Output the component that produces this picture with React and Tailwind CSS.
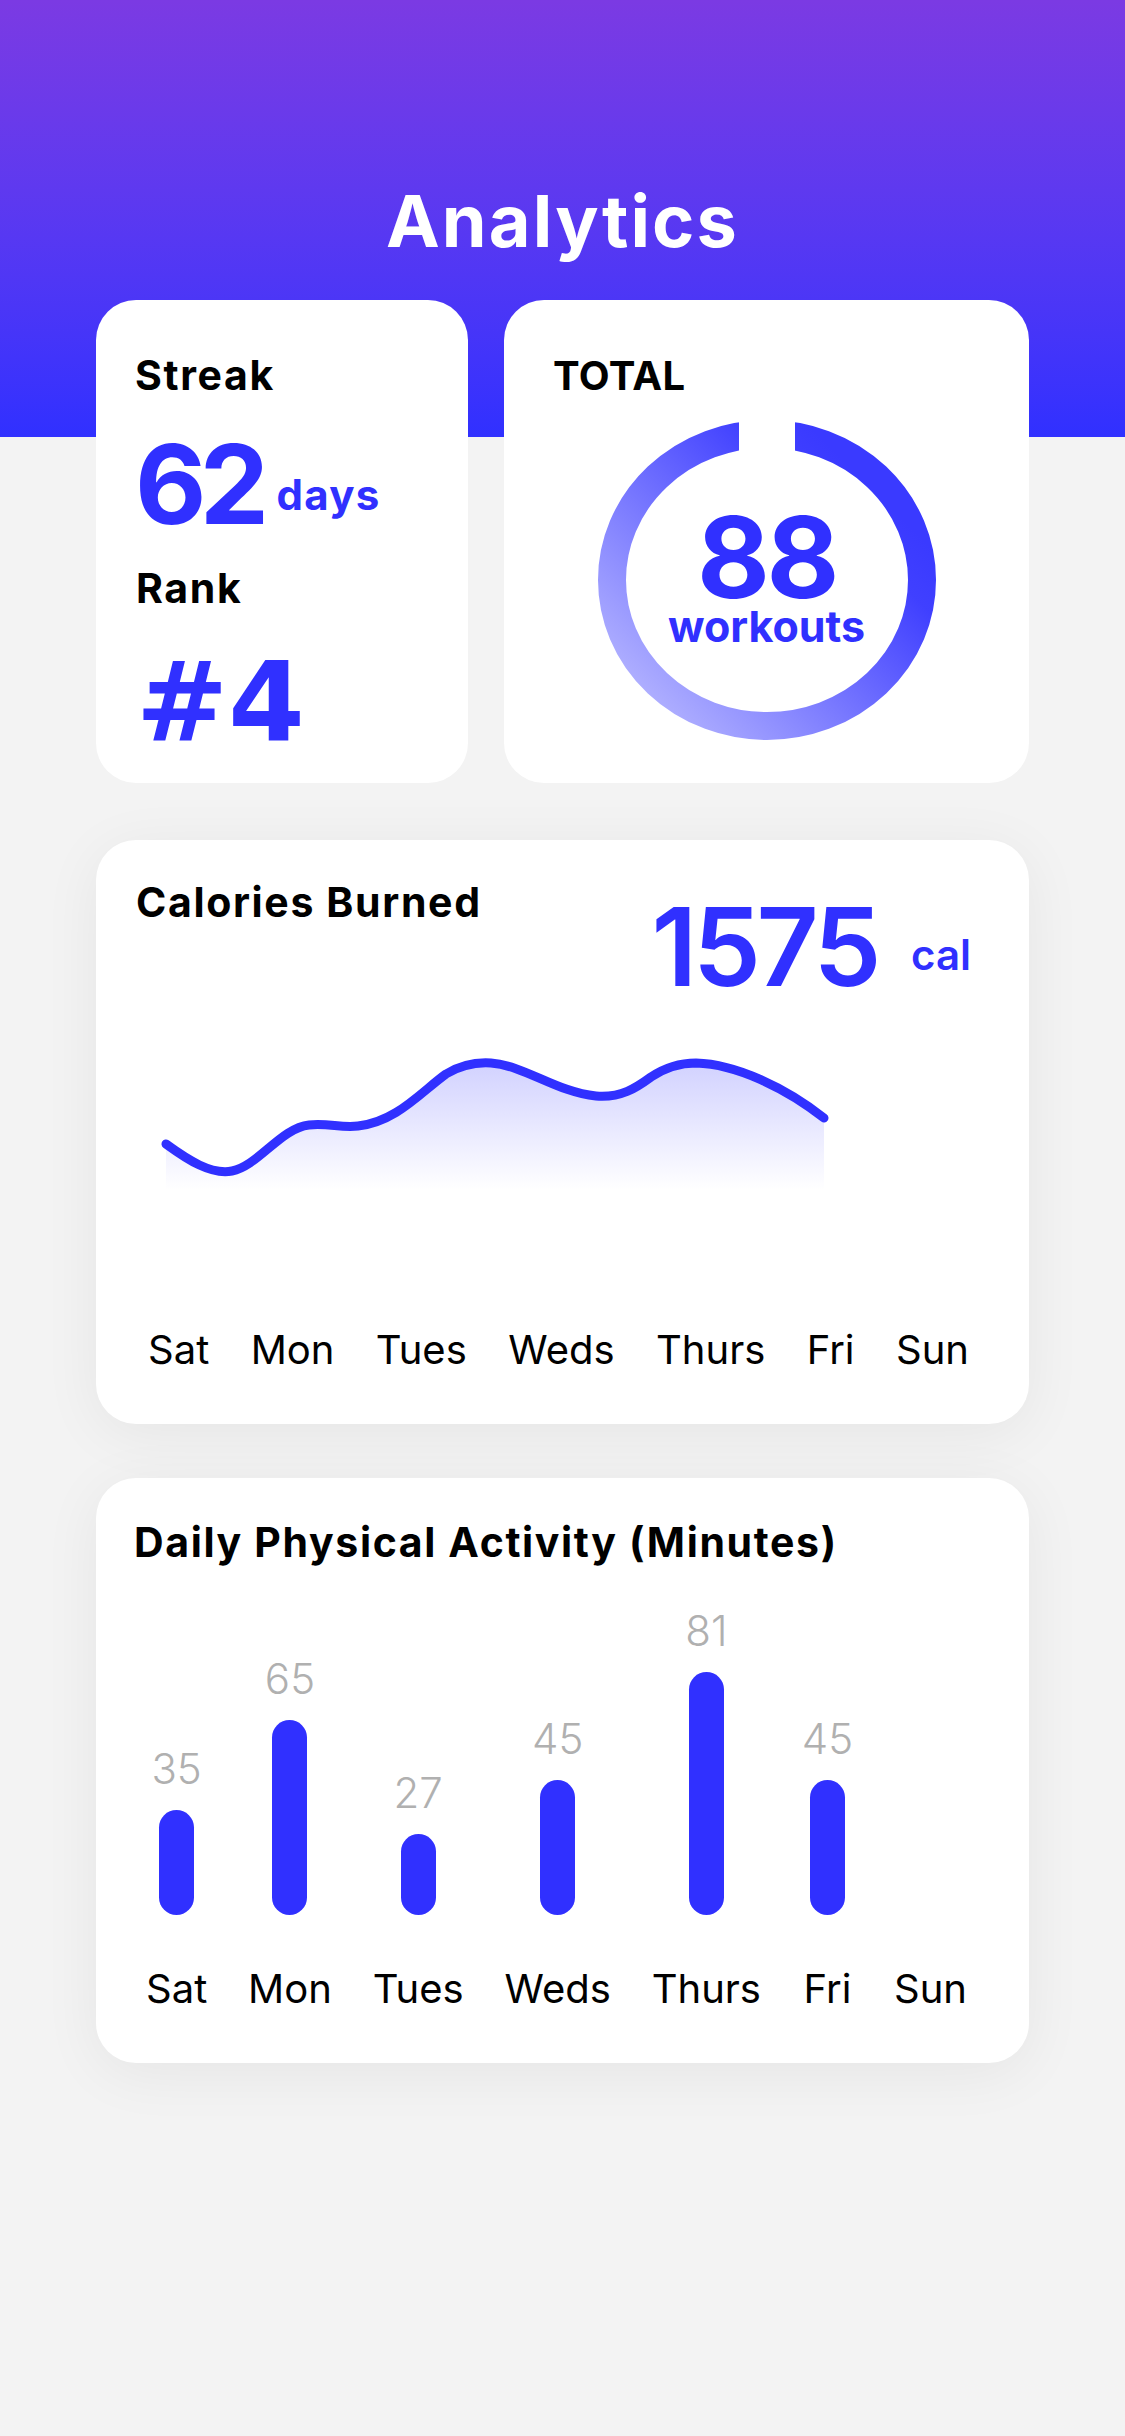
export default function App() {
  const days = ['Sat', 'Mon', 'Tues', 'Weds', 'Thurs', 'Fri', 'Sun'];
  const activity = [35, 65, 27, 45, 81, 45, null];
  const line =
    'M70,114 C92,130 115,145 136,141 C162,136 185,98 213,95 C232,93 245,98 262,96 C300,92 325,62 350,44 C365,35 380,32 395,33 C430,36 460,62 500,66 C525,68 540,58 555,47 C570,37 585,33 600,33 C640,34 690,58 728,88';
  return (
    <div className="w-[1125px] min-h-[2436px] bg-[#f3f3f3] font-['Inter',sans-serif] text-black">
      <div className="h-[437px] bg-linear-to-b from-[#7b3ae3] to-[#3030ff] pt-[185px] text-center">
        <h1 className="text-[72px] leading-none font-bold text-white tracking-[0.03em]">Analytics</h1>
      </div>
      <div className="-mt-[137px] px-[96px] flex flex-col">
        <div className="flex gap-[36px]">
          <div className="w-[372px] h-[483px] shrink-0 rounded-[40px] bg-white pt-[55px] pl-[39px]">
            <div className="text-[41px] leading-none font-bold tracking-[0.04em]">Streak</div>
            <div className="mt-[33px] flex items-end">
              <span className="text-[110px] leading-none font-bold text-[#3030ff] tracking-[-0.06em]">62</span>
              <span className="ml-[14px] mb-[23px] text-[42px] leading-none font-bold text-[#3030ff] tracking-[0.03em]">days</span>
            </div>
            <div className="mt-[29px] ml-[1px] text-[41px] leading-none font-bold tracking-[0.04em]">Rank</div>
            <div className="mt-[39px] ml-[1px] text-[110px] leading-none font-bold font-['DejaVu_Sans',sans-serif] text-[#3030ff]">#4</div>
          </div>
          <div className="flex-1 h-[483px] rounded-[40px] bg-white pt-[56px] flex flex-col items-center">
            <div className="self-start pl-[49px] text-[40px] leading-none font-bold tracking-[0.01em]">TOTAL</div>
            <div className="relative mt-[24px] w-[338px] h-[320px]">
              <svg width="338" height="320" viewBox="0 0 338 320" className="absolute inset-0">
                <defs>
                  <linearGradient id="ringGrad" x1="0.1" y1="0.9" x2="0.85" y2="0.2">
                    <stop offset="0" stopColor="#b0b0ff" />
                    <stop offset="0.85" stopColor="#4040ff" />
                    <stop offset="1" stopColor="#3a3aff" />
                  </linearGradient>
                  <mask id="ringMask">
                    <rect width="338" height="320" fill="white" />
                    <rect x="141" y="0" width="56" height="60" fill="black" />
                  </mask>
                </defs>
                <ellipse cx="169" cy="160" rx="155" ry="146" fill="none" stroke="url(#ringGrad)" strokeWidth="28" mask="url(#ringMask)" />
              </svg>
              <div className="absolute inset-0 flex flex-col items-center pt-[89px]">
                <span className="text-[112px] leading-[96px] font-bold text-[#3030ff] tracking-[-0.03em]">88</span>
                <span className="text-[43px] leading-none font-bold text-[#3030ff]">workouts</span>
              </div>
            </div>
          </div>
        </div>

        <div className="mt-[57px] h-[584px] rounded-[40px] bg-white shadow-[0_10px_60px_rgba(0,0,0,0.06)] flex flex-col pt-[42px] pb-[54px]">
          <div className="flex justify-between items-start pl-[40px] pr-[58px]">
            <div className="text-[41px] leading-none font-bold tracking-[0.04em]">Calories Burned</div>
            <div className="flex items-end mt-[11px]">
              <span className="text-[108px] leading-none font-semibold text-[#3030ff] tracking-[-0.04em]">1575</span>
              <span className="ml-[34px] mb-[25px] text-[42px] leading-none font-semibold text-[#3030ff]">cal</span>
            </div>
          </div>
          <svg className="mt-[29px] block" width="934" height="200" viewBox="0 0 934 200">
            <defs>
              <linearGradient id="areaGrad" x1="0" y1="33" x2="0" y2="160" gradientUnits="userSpaceOnUse">
                <stop offset="0" stopColor="#3030ff" stopOpacity="0.22" />
                <stop offset="1" stopColor="#3030ff" stopOpacity="0" />
              </linearGradient>
            </defs>
            <path d={line + ' L728,160 L70,160 Z'} fill="url(#areaGrad)" />
            <path d={line} fill="none" stroke="#3030ff" strokeWidth="9" strokeLinecap="round" strokeLinejoin="round" />
          </svg>
          <div className="mt-auto flex justify-between pl-[52px] pr-[60px]">
            {days.map((d) => (
              <span key={d} className="text-[40px] leading-none font-normal">{d}</span>
            ))}
          </div>
        </div>

        <div className="mt-[54px] h-[585px] rounded-[40px] bg-white shadow-[0_10px_60px_rgba(0,0,0,0.06)] flex flex-col pt-[44px] pb-[54px]">
          <div className="pl-[38px] text-[41px] leading-none font-bold tracking-[0.04em]">Daily Physical Activity (Minutes)</div>
          <div className="mt-auto flex items-end justify-between pl-[50px] pr-[62px]">
            {days.map((d, i) => (
              <div key={d} className="flex flex-col items-center">
                {activity[i] != null && (
                  <>
                    <span className="mb-[20px] text-[42px] leading-none font-light text-[#b0b0b0]">{activity[i]}</span>
                    <div className="w-[35px] rounded-full bg-[#3030ff]" style={{ height: activity[i] * 3 }} />
                  </>
                )}
                <span className="mt-[54px] text-[40px] leading-none font-normal">{d}</span>
              </div>
            ))}
          </div>
        </div>
      </div>
    </div>
  );
}
